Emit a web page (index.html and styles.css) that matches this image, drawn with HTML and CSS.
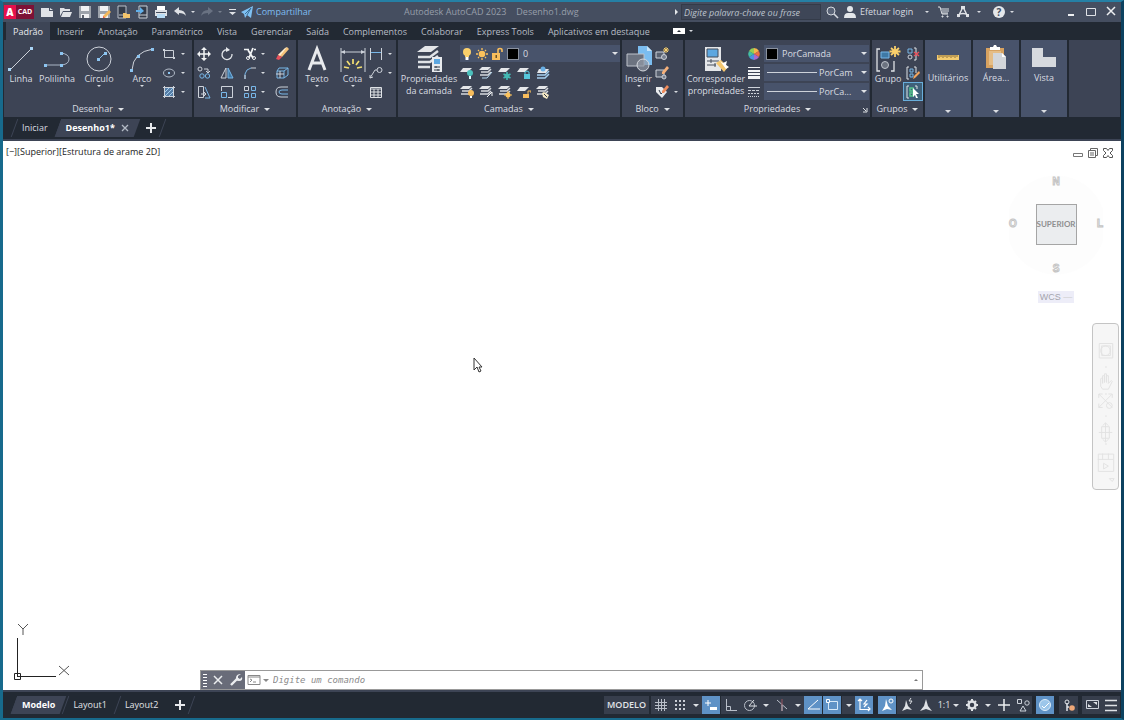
FILE: index.html
```
<!DOCTYPE html>
<html lang="pt-BR">
<head>
    <meta charset="UTF-8">
    <meta name="viewport" content="width=device-width, initial-scale=1.0">
    <title>Autodesk AutoCAD 2023 - Desenho1.dwg</title>
    <link rel="stylesheet" href="styles.css">
</head>
<body>
    <!-- Símbolos compartilhados -->
    <svg class="sprite" aria-hidden="true">
        <symbol id="sheets" viewBox="0 0 14 14">
            <path d="M3 1h9L9 4H0z" fill="#e4e6e9"/>
            <path d="M2 6h7l3-3M1 9h8l3-3" fill="none" stroke="#d5d8dd" stroke-width="1.500"/>
        </symbol>
        <symbol id="sheet" viewBox="0 0 14 14"><path d="M3 2h9L8 6H0z" fill="#e4e6e9"/></symbol>
        <symbol id="bulb" viewBox="0 0 14 14">
            <circle cx="7" cy="5" r="4" fill="#fbd06b"/><path d="M5 8h4v2H5z" fill="#fbd06b"/><path d="M5.500 10h3v3h-3z" fill="#fff"/>
        </symbol>
        <symbol id="sun" viewBox="0 0 14 14">
            <circle cx="7" cy="7" r="3.300" fill="#fbc25c"/>
            <path d="M7 1v2M7 11v2M1 7h2M11 7h2M3 3l1 1M10 10l1 1M11 3l-1 1M4 10l-1 1" stroke="#fbc25c" stroke-width="1.300"/>
        </symbol>
        <symbol id="unlock" viewBox="0 0 14 14">
            <path d="M2 6h8v7H2z" fill="#f8bd5c"/><path d="M8 6V3q0-1.500 2-1.500t2 1.500v2" fill="none" stroke="#f8bd5c" stroke-width="1.600"/><path d="M5.500 8h1.500v3H5.500z" fill="#6b5327"/>
        </symbol>
        <symbol id="pencil" viewBox="0 0 14 14">
            <path d="M12 0l2 2-7 8-4-2z" fill="#f5c27a"/><path d="M10 1l2-1-7 9-2-1z" fill="#fff0d0"/><path d="M3 8l4 2-3 3-3-1z" fill="#e8505b"/>
        </symbol>
    </svg>

    <header class="titlebar">
        <button class="logo" aria-label="AutoCAD"><b>A</b><span>CAD</span></button>
        <div class="quick">
            <button aria-label="Novo"><svg viewBox="0 0 14 14"><path d="M1 3h8v3h4v6H1z" fill="#dfe2e6"/><path d="M10 3l3 2h-3z" fill="#dfe2e6"/></svg></button>
            <button aria-label="Abrir"><svg viewBox="0 0 14 14"><path d="M1 11V3h4l1 1h5v2H4z" fill="#dfe2e6"/><path d="M4 7h9l-2 5H2z" fill="#dfe2e6"/></svg></button>
            <button aria-label="Salvar"><svg viewBox="0 0 14 14"><path d="M1 1h12v12H1z" fill="#9da3ab"/><path d="M3 1h8v5H3zM3 9h8v4H3z" fill="#f0f1f3"/><path d="M4 10h2v3H4z" fill="#59606c"/></svg></button>
            <button aria-label="Salvar como"><svg viewBox="0 0 14 14"><path d="M1 1h12v12H1z" fill="#9da3ab"/><path d="M3 1h8v5H3zM3 9h8v4H3z" fill="#f0f1f3"/><path d="M12 5l2 2-6 6-2 0 0-2z" fill="#f5b95c"/><path d="M6 11l2 2H6z" fill="#e8505b"/></svg></button>
            <button aria-label="Abrir da web"><svg viewBox="0 0 14 14"><path d="M2 1h8v12H2zM3 10h6" fill="#343c4a" stroke="#b9bfc8"/><path d="M7 8h3l1 1h3v4H7z" fill="#f3c46c"/></svg></button>
            <button aria-label="Salvar na web"><svg viewBox="0 0 14 14"><path d="M4 1h8v12H4zM4 10h8" fill="#343c4a" stroke="#c9cfd6"/><path d="M1 5h4V2l4 4-4 3V7H1z" fill="#61b0ea"/></svg></button>
            <button aria-label="Plotar"><svg viewBox="0 0 14 14"><path d="M3 1h8v4H3z" fill="#fff"/><path d="M1 5h12v6H1z" fill="#dfe2e6"/><path d="M2 7h10v1H2z" fill="#454f61"/><path d="M3 9h8v4H3z" fill="#b8dcf5"/></svg></button>
            <button class="undo" aria-label="Desfazer"><svg viewBox="0 0 14 14"><path d="M1 6l5-4v3q6 0 7 6-2-3-7-3v2z" fill="#dfe2e6"/></svg></button>
            <button class="drop" aria-label="Histórico"></button>
            <button class="redo" aria-label="Refazer"><svg viewBox="0 0 14 14"><path d="M13 6L8 2v3q-6 0-7 6 2-3 7-3v2z" fill="#697282"/></svg></button>
            <button class="drop dim" aria-label="Histórico"></button>
            <button class="custom" aria-label="Personalizar"><svg viewBox="0 0 14 14"><path d="M4 4h7v1H4zM4 7h7L7.500 10z" fill="#dfe2e6"/></svg></button>
        </div>
        <button class="share"><svg viewBox="0 0 14 14"><path d="M1 7l12-6-2 12-4-3-2 3-1-4z" fill="#7fc1f3"/><path d="M5 9l6-6-4 7" fill="none" stroke="#3b6f99"/></svg>Compartilhar</button>
        <h1><span>Autodesk AutoCAD 2023</span><span>Desenho1.dwg</span></h1>
        <div class="account">
            <button class="side" aria-label="Recolher"></button>
            <input type="text" placeholder="Digite palavra-chave ou frase" aria-label="Pesquisar">
            <button aria-label="Buscar"><svg viewBox="0 0 14 14" fill="none" stroke="#d5d9df"><circle cx="6" cy="6" r="4" fill="#596376"/><path d="M9 9l4 4" stroke-width="1.600"/></svg></button>
            <button class="login"><svg viewBox="0 0 14 14"><circle cx="7" cy="4" r="3" fill="#e4e7ea"/><path d="M1 13q0-5 4-5h4q4 0 4 5z" fill="#e4e7ea"/></svg>Efetuar login</button>
            <button class="drop" aria-label="Opções da conta"></button>
            <button class="cart" aria-label="Loja"><svg viewBox="0 0 14 14" fill="none" stroke="#dfe2e6"><path d="M1 2h2l2 7h6M4 4h8M5 6h7M5 8h6"/><path d="M5 11h1v1H5zM10 11h1v1h-1z"/></svg></button>
            <button class="apps" aria-label="Autodesk App Store"><svg viewBox="0 0 14 14"><path d="M7 2L2 12M7 2l5 10M2 10q5-3 10 0" fill="none" stroke="#dfe2e6" stroke-width="1.500"/><path d="M5 1h4v3H5zM1 9h3v3H1zM10 9h3v3h-3z" fill="#dfe2e6"/></svg></button>
            <button class="drop" aria-label="Mais"></button>
            <button class="help" aria-label="Ajuda">?</button>
            <button class="drop" aria-label="Mais ajuda"></button>
        </div>
        <div class="window">
            <button aria-label="Minimizar"><svg viewBox="0 0 14 14"><path d="M4 10h6" stroke="#eef0f2" stroke-width="2"/></svg></button>
            <button aria-label="Maximizar"><svg viewBox="0 0 14 14"><path d="M2.500 3.500h9v7h-9z" fill="none" stroke="#dfe2e6"/></svg></button>
            <button aria-label="Fechar"><svg viewBox="0 0 14 14"><path d="M3 2l8 8M11 2l-8 8" stroke="#eef0f2" stroke-width="1.500"/></svg></button>
        </div>
    </header>

    <nav class="ribbon-tabs">
        <a class="active" href="#">Padrão</a>
        <a href="#">Inserir</a>
        <a href="#">Anotação</a>
        <a href="#">Paramétrico</a>
        <a href="#">Vista</a>
        <a href="#">Gerenciar</a>
        <a href="#">Saída</a>
        <a href="#">Complementos</a>
        <a href="#">Colaborar</a>
        <a href="#">Express Tools</a>
        <a href="#">Aplicativos em destaque</a>
        <button class="minimize" aria-label="Minimizar faixa de opções"></button>
        <button class="drop" aria-label="Opções da faixa"></button>
    </nav>

    <div class="ribbon">
        <section class="panel draw">
            <div class="tools">
                <button class="big"><svg viewBox="0 0 28 28"><path d="M3 25L25 3" stroke="#cdd2da"/><path d="M1 23h3v3H1zM23 2h3v3h-3z" fill="#a9d4f5"/></svg>Linha</button>
                <button class="big"><svg viewBox="0 0 28 28"><path d="M2 20h17q7-1 7-6t-8-6" fill="none" stroke="#aab5c6"/><path d="M1 19h3v3H1zM17 19h3v3h-3zM17 7h3v3h-3z" fill="#8cc4f0"/></svg>Polilinha</button>
                <button class="big more"><svg viewBox="0 0 28 28"><circle cx="14" cy="14" r="12" fill="none" stroke="#cdd2da"/><path d="M14 14l6-6" stroke="#8cc4f0"/><path d="M12 13h3v3h-3zM19 7h3v3h-3z" fill="#8cc4f0"/></svg>Círculo</button>
                <button class="big more"><svg viewBox="0 0 28 28"><path d="M4 25Q5 7 25 4" fill="none" stroke="#cdd2da"/><path d="M2 24h3v3H2zM9 10h3v3H9zM23 3h3v3h-3z" fill="#8cc4f0"/></svg>Arco</button>
                <div class="small split">
                    <button aria-label="Retângulo"><svg viewBox="0 0 14 14"><path d="M2.500 3.500h9v7h-9z" fill="none" stroke="#cdd2da"/><path d="M1 2h2v2H1zM11 10h2v2h-2z" fill="#cdd2da"/></svg></button><button class="drop" aria-label="Mais"></button>
                    <button aria-label="Elipse"><svg viewBox="0 0 14 14"><ellipse cx="7" cy="7" rx="5.500" ry="4" fill="none" stroke="#b3bcc9"/><path d="M6 6h2v2H6z" fill="#8cc4f0"/></svg></button><button class="drop" aria-label="Mais"></button>
                    <button aria-label="Hachura"><svg viewBox="0 0 14 14"><path d="M3 3h8v8H3z" fill="#557da6"/><path d="M1 2.500h12M1 11.500h12M2.500 1v12M11.500 1v12" stroke="#cdd2da"/><path d="M3 7l4-4M3 11l8-8M7 11l4-4" stroke="#a5cdec"/></svg></button><button class="drop" aria-label="Mais"></button>
                </div>
            </div>
            <button class="caption">Desenhar</button>
        </section>

        <section class="panel modify">
            <div class="tools small">
                <button aria-label="Mover"><svg viewBox="0 0 14 14"><path d="M7 1v12M1 7h12" stroke="#f1f3f5" stroke-width="1.500"/><path d="M7 0l3 3H4zM7 14l3-3H4zM0 7l3-3v6zM14 7l-3-3v6z" fill="#f1f3f5"/></svg></button>
                <button aria-label="Rotacionar"><svg viewBox="0 0 14 14"><path d="M9 3a5 5 0 1 0 3 4" fill="none" stroke="#e4e7ea" stroke-width="1.300"/><path d="M6 0l4 3-4 2z" fill="#e4e7ea"/></svg></button>
                <button aria-label="Aparar"><svg viewBox="0 0 14 14" fill="none" stroke="#f1f3f5"><path d="M1 2.500h5M11 2.500h2" stroke-width="1.500"/><path d="M5 3l5 8M10 1L6 11" stroke-width="1.800"/><circle cx="5" cy="11" r="1.500"/><circle cx="11" cy="11" r="1.500"/></svg></button><button class="drop" aria-label="Mais"></button>
                <button aria-label="Apagar"><svg viewBox="0 0 14 14"><use href="#pencil"/></svg></button>
                <button aria-label="Copiar"><svg viewBox="0 0 14 14" fill="none" stroke="#cdd2da"><circle cx="3" cy="3" r="2"/><path d="M7 3h4v3M9 5l2 2 2-2"/><g stroke="#78b7e8"><circle cx="5" cy="10" r="2.200"/><circle cx="10.500" cy="10" r="2.200"/></g></svg></button>
                <button aria-label="Espelhar"><svg viewBox="0 0 14 14"><path d="M6 2v10H1z" fill="none" stroke="#cdd2da"/><path d="M8 2v10h5z" fill="#3f79a6" stroke="#78b7e8"/></svg></button>
                <button aria-label="Arredondar"><svg viewBox="0 0 14 14" fill="none"><path d="M2 13V8q1-5 6-6" stroke="#78b7e8"/><path d="M8 2h5M2 9v4" stroke="#cdd2da"/></svg></button><button class="drop" aria-label="Mais"></button>
                <button aria-label="Explodir"><svg viewBox="0 0 14 14" fill="none" stroke="#78b7e8"><path d="M2 5h7v7H2zM4 2h9v7M2 5l2-3M9 5l4-3M9 12l4-3"/><path d="M5 5v7M1 8h8" stroke="#cdd2da"/></svg></button>
                <button aria-label="Esticar"><svg viewBox="0 0 14 14" fill="none" stroke="#cdd2da"><path d="M1.500 1.500h5v11h-5zM4 9h5M7 7l2 2-2 2"/><path d="M8 2l5 11H8" stroke="#78b7e8"/></svg></button>
                <button aria-label="Escala"><svg viewBox="0 0 14 14" fill="none"><path d="M1.500 6V1.500h11v11H8" stroke="#cdd2da"/><path d="M1.500 7.500h5v5h-5z" stroke="#78b7e8"/></svg></button>
                <button aria-label="Matriz"><svg viewBox="0 0 14 14" fill="none" stroke="#78b7e8"><path d="M8.500 1.500h4v4h-4zM1.500 8.500h4v4h-4zM8.500 8.500h4v4h-4z"/><path d="M1.500 1.500h4v4h-4z" stroke="#cdd2da"/></svg></button><button class="drop" aria-label="Mais"></button>
                <button aria-label="Deslocamento"><svg viewBox="0 0 14 14" fill="none"><path d="M13 2H6q-5 0-5 5t5 5h7" stroke="#cdd2da"/><path d="M13 5H7q-3 0-3 2t3 2h6" stroke="#78b7e8"/></svg></button>
            </div>
            <button class="caption">Modificar</button>
        </section>

        <section class="panel annotate">
            <div class="tools">
                <button class="big more"><svg viewBox="0 0 28 28"><path d="M6 25l8-21 8 21M9 18h10" fill="none" stroke="#e8eaed" stroke-width="3"/></svg>Texto</button>
                <button class="big more"><svg viewBox="0 0 28 28"><path d="M2 3v24M26 3v24M2 7h24" stroke="#cdd2da"/><path d="M2 7l4-2v4zM26 7l-4-2v4z" fill="#cdd2da"/><path d="M14 14v5M8 16l3 4M20 16l-3 4M5 22l5 1M23 22l-5 1" stroke="#f3df72" stroke-width="1.700"/></svg>Cota</button>
                <div class="small split">
                    <button aria-label="Linear"><svg viewBox="0 0 14 14" fill="none"><path d="M1.500 1v12M12.500 1v12" stroke="#cdd2da"/><path d="M2 5.500h10" stroke="#78b7e8"/></svg></button><button class="drop" aria-label="Mais"></button>
                    <button aria-label="Chamada"><svg viewBox="0 0 14 14" fill="none" stroke="#cdd2da"><circle cx="10.500" cy="4" r="2.500"/><path d="M8 4H6l-5 8M1 9v3l3-1"/></svg></button><button class="drop" aria-label="Mais"></button>
                    <button aria-label="Tabela"><svg viewBox="0 0 14 14" fill="none" stroke="#dfe2e6"><path d="M1.500 2.500h11v10h-11zM1 4h12M1 7h12M1 10h12M5 4v8M9 4v8"/></svg></button>
                </div>
            </div>
            <button class="caption">Anotação</button>
        </section>

        <section class="panel layers">
            <div class="tools">
                <button class="big"><svg viewBox="0 0 28 28"><path d="M10 1h14l-8 6H2z" fill="#e4e6e9"/><path d="M3 12h12l8-6M3 17h12l8-6M3 22h12" fill="none" stroke="#dfe2e6" stroke-width="2.500"/><path d="M17 12h10v15H17z" fill="#e9ebee"/><path d="M19 14h6v5h-6z" fill="#5da7e0"/><path d="M19 22h6M19 25h6M21 21v2M23 24v2" stroke="#333c48"/></svg>Propriedades<br>da camada</button>
                <div class="layer-tools">
                    <label class="combo"><svg><use href="#bulb"/></svg><svg><use href="#sun"/></svg><svg><use href="#unlock"/></svg><i class="swatch"></i><select aria-label="Camada atual"><option>0</option></select></label>
                    <div class="layer-icons">
                        <button aria-label="Desativar"><svg viewBox="0 0 14 14"><use href="#sheet"/><circle cx="10" cy="7" r="3" fill="#4bc1bd"/><path d="M9 10h2v3H9z" fill="#dff"/></svg></button>
                        <button aria-label="Isolar"><svg viewBox="0 0 14 14"><use href="#sheets"/><path d="M3 12h5l5-6" fill="none" stroke="#b6d7ef"/></svg></button>
                        <button aria-label="Congelar"><svg viewBox="0 0 14 14"><use href="#sheet"/><circle cx="9" cy="10" r="2.500" fill="#43b8b3"/><path d="M9 6v8M5.500 8l7 4M12.500 8l-7 4" stroke="#43b8b3" stroke-width="1.600"/></svg></button>
                        <button aria-label="Bloquear"><svg viewBox="0 0 14 14"><use href="#sheet"/><path d="M7 8h6v5H7z" fill="#55c7db"/><path d="M8 8V6q2-2 4 0v2" fill="none" stroke="#55c7db"/></svg></button>
                        <button aria-label="Tornar atual"><svg viewBox="0 0 14 14"><path d="M3 3h10l-3 4H1z" fill="#e4e6e9"/><circle cx="7" cy="3" r="2.500" fill="#69aee3"/><path d="M1 9h8l4-4M1 12h8l4-4" fill="none" stroke="#a6d0ef" stroke-width="1.500"/></svg></button>
                        <button aria-label="Ativar"><svg viewBox="0 0 14 14"><use href="#sheets"/><circle cx="11" cy="8" r="3" fill="#f8bd5c"/><path d="M10 11h2v2h-2z" fill="#fff"/></svg></button>
                        <button aria-label="Retirar isolamento"><svg viewBox="0 0 14 14"><use href="#sheets"/><path d="M8 12l5-5v4" fill="none" stroke="#f1f3f5"/></svg></button>
                        <button aria-label="Descongelar"><svg viewBox="0 0 14 14"><use href="#sheets"/><circle cx="10" cy="10" r="2.500" fill="#fbc25c"/><path d="M10 6v8M6 10h8" stroke="#fbc25c"/></svg></button>
                        <button aria-label="Desbloquear"><svg viewBox="0 0 14 14"><use href="#sheet"/><path d="M6 9h6v4H6z" fill="#f8bd5c"/><path d="M11 9V6h3v2" fill="none" stroke="#f8bd5c"/></svg></button>
                        <button aria-label="Coincidir camada"><svg viewBox="0 0 14 14"><use href="#sheets"/><path d="M6 8l2-1 5 3-2 4-4-2z" fill="#f4e8c4"/><path d="M8 9l3 3" stroke="#343c4a"/></svg></button>
                    </div>
                </div>
            </div>
            <button class="caption">Camadas</button>
        </section>

        <section class="panel block">
            <div class="tools">
                <button class="big more"><svg viewBox="0 0 28 28"><path d="M13 1h9l5 5v14H13z" fill="#7bbdf0"/><path d="M22 1v5h5" fill="#c7e3f8"/><path d="M2 9h17v12H2z" fill="#6c7380" stroke="#bfc4cc"/><circle cx="18" cy="20" r="6" fill="#9299a5" fill-opacity=".7" stroke="#d5d9df"/></svg>Inserir</button>
                <div class="small split">
                    <button aria-label="Criar bloco"><svg viewBox="0 0 14 14"><path d="M1 5h8v6H1z" fill="#596170" stroke="#cdd2da"/><circle cx="9" cy="10" r="2.500" fill="#778090" stroke="#cdd2da"/><path d="M11 0v6M8 3h6M9 1l4 4M13 1L9 5" stroke="#fbd06b"/></svg></button><span></span>
                    <button aria-label="Editar bloco"><svg viewBox="0 0 14 14"><path d="M1 4h8v7H1z" fill="#596170" stroke="#cdd2da"/><circle cx="9" cy="11" r="2" fill="#778090" stroke="#cdd2da"/><path d="M12 0l2 2-5 6-2 0 0-2z" fill="#f5b07a"/></svg></button><span></span>
                    <button aria-label="Editar atributo"><svg viewBox="0 0 14 14"><path d="M1 2h6l5 5-5 6-6-6z" fill="#e9ebee"/><path d="M4 5l2 4 2-2" fill="none" stroke="#343c4a"/><path d="M12 0l2 2-5 6-2 0 0-2z" fill="#f08c5c"/></svg></button><button class="drop" aria-label="Mais"></button>
                </div>
            </div>
            <button class="caption">Bloco</button>
        </section>

        <section class="panel properties">
            <div class="tools">
                <button class="big"><svg viewBox="0 0 28 28"><path d="M3 2h16v24H3z" fill="#e4e6e9"/><path d="M5 4h11v8H5z" fill="#5da7e0" stroke="#454d5a"/><path d="M5 16h12M5 20h9M9 14v4M13 18v4" stroke="#454d5a"/><path d="M14 18l5-3 7 7-4 5z" fill="#f5c76e"/><path d="M18 16l3 2 4-2-1 4 3 2-3 2z" fill="#fff"/></svg>Corresponder<br>propriedades</button>
                <div class="prop-list">
                    <svg viewBox="0 0 14 14"><path d="M7 7V1a6 6 0 0 1 5 3z" fill="#f5b64b"/><path d="M7 7l5-3a6 6 0 0 1 0 6z" fill="#ea6e45"/><path d="M7 7l5 3a6 6 0 0 1-5 3z" fill="#a968cf"/><path d="M7 7v6a6 6 0 0 1-5-3z" fill="#4a94e4"/><path d="M7 7l-5 3a6 6 0 0 1 0-6z" fill="#42bfa6"/><path d="M7 7L2 4a6 6 0 0 1 5-3z" fill="#92cd56"/></svg>
                    <label class="combo"><i class="swatch"></i><select aria-label="Cor"><option>PorCamada</option></select></label>
                    <svg viewBox="0 0 14 14"><path d="M1 1h12v1H1zM1 4h12v2H1zM1 7h12v2H1zM1 10h12v3H1z" fill="#f1f3f5"/></svg>
                    <label class="combo"><i class="stroke"></i><select aria-label="Espessura de linha"><option>PorCam</option></select></label>
                    <svg viewBox="0 0 14 14" stroke="#cdd2da"><path d="M1 2.500h12"/><path d="M1 5.500h12" stroke-dasharray="3 1"/><path d="M1 8.500h12" stroke-dasharray="2 1"/><path d="M1 11.500h12" stroke-dasharray="1 1"/></svg>
                    <label class="combo"><i class="stroke"></i><select aria-label="Tipo de linha"><option>PorCa...</option></select></label>
                </div>
            </div>
            <button class="caption">Propriedades</button>
            <button class="launcher" aria-label="Abrir propriedades"><svg viewBox="0 0 6 6"><path d="M1 1l3 3M5 1v4H1" fill="none" stroke="#dfe2e6"/></svg></button>
        </section>

        <section class="panel groups">
            <div class="tools">
                <button class="big"><svg viewBox="0 0 28 28"><path d="M6 4H3v22h3M17 26h3V16" fill="none" stroke="#dfe2e6" stroke-width="1.300"/><path d="M7 7h8v6H7z" fill="#3f79a6" stroke="#78b7e8"/><circle cx="11" cy="20" r="3.500" fill="#6c7380" stroke="#bfc4cc"/><path d="M21 1v11M15.500 6.500h11M17 3l8 7M25 3l-8 7" stroke="#fbd06b" stroke-width="1.800"/></svg>Grupo</button>
                <div class="small">
                    <button aria-label="Desagrupar"><svg viewBox="0 0 14 14" fill="none"><path d="M2 2h4v4H2z" stroke="#78b7e8"/><circle cx="4" cy="10" r="2" stroke="#cdd2da"/><path d="M8 1h2v12H8" stroke="#dfe2e6"/><path d="M8 5l5 4M13 5L8 9" stroke="#e8505b" stroke-width="1.500"/></svg></button>
                    <button aria-label="Editar grupo"><svg viewBox="0 0 14 14" fill="none"><path d="M3 1H1v12h2M8 1h2v6" stroke="#dfe2e6"/><path d="M4 3h3v3H4zM4 8h3v3H4z" stroke="#78b7e8"/><path d="M13 5l1 2-5 5-2 1 1-3z" fill="#f5a45c"/></svg></button>
                    <button class="on" aria-label="Seleção de grupo"><svg viewBox="0 0 14 14" fill="none"><path d="M3 1H1v12h2M9 1h2v3" stroke="#dfe2e6"/><path d="M4 3h3v3H4zM4 8h3v3H4z" stroke="#57c48d" stroke-width="1.500"/><path d="M7 3l6 6-3 0 2 4-2 0-1-3-2 2z" fill="#fff"/></svg></button>
                </div>
            </div>
            <button class="caption">Grupos</button>
        </section>

        <button class="folded"><svg viewBox="0 0 28 28"><path d="M3 11h22v5H3z" fill="#f3cc70"/><path d="M5 11v3M7 11v2M9 11v3M11 11v2M13 11v3M15 11v2M17 11v3M19 11v2M21 11v3M23 11v2" stroke="#8e713a"/></svg>Utilitários</button>
        <button class="folded"><svg viewBox="0 0 28 28"><path d="M4 4h18v20H4z" fill="#d7a260"/><path d="M7 7h12v14H7z" fill="#e5bd86"/><path d="M8 3h3l1-2h2l1 2h3v3H8z" fill="#fff"/><path d="M11 9h9l4 4v12H11z" fill="#d3d6da"/><path d="M20 9v4h4z" fill="#fff"/></svg>Área...</button>
        <button class="folded"><svg viewBox="0 0 28 28"><path d="M2 4h11v9h13v10H2z" fill="#d6d9de"/></svg>Vista</button>
        <div class="rest"></div>
    </div>

    <nav class="file-tabs">
        <a href="#">Iniciar</a>
        <a class="active" href="#">Desenho1* <svg viewBox="0 0 8 8"><path d="M1 1l6 6M7 1L1 7" stroke="#b3bac5" stroke-width="1.300"/></svg></a>
        <button class="plus" aria-label="Novo desenho"></button>
    </nav>

    <main class="canvas">
        <div class="view-label"><button>[−]</button><button>[Superior]</button><button>[Estrutura de arame 2D]</button></div>
        <div class="view-window">
            <button aria-label="Minimizar"><svg viewBox="0 0 12 12"><path d="M1.500 6.500h9v3h-9z" fill="none" stroke="#777"/></svg></button>
            <button aria-label="Restaurar"><svg viewBox="0 0 12 12"><path d="M3.500 3V1.500h7v7H9M1.500 3.500h7v7h-7zM3 6h4M3 8h4" fill="none" stroke="#666"/></svg></button>
            <button aria-label="Fechar"><svg viewBox="0 0 12 12"><path d="M1.500 1.500h3l1.500 2 1.500-2h3v2L8 6l2.500 2.500v2h-3L6 8.500l-1.500 2h-3v-2L4 6 1.500 3.500z" fill="none" stroke="#555"/></svg></button>
        </div>
        <div class="cube">
            <button class="north">N</button>
            <button class="west">O</button>
            <button class="face">SUPERIOR</button>
            <button class="east">L</button>
            <button class="south">S</button>
            <button class="wcs">WCS <span>—</span></button>
        </div>
        <div class="navbar">
            <svg viewBox="0 0 26 166" fill="none" stroke="#e2e2e2">
                <path d="M6.500 17.500h14v15h-14zM9 20h9v10H9z"/><circle cx="13" cy="25" r="5"/>
                <path d="M13 42h1M13 70h1M13 93h1M13 122h1" stroke-width="2"/>
                <path d="M8 62V54l2-1v6-8h2v7-9h2v9-7h2v8l3-3 1 1-4 8h-6z"/>
                <path d="M6 70l14 14M20 70L6 84M6 74v-4h4M16 70h4v4M6 80v4h4"/><circle cx="17" cy="82" r="3"/>
                <path d="M13 100v20M6 110h14M10 103l3-3 3 3M10 117l3 3 3-3M9 104v12h8v-12z"/>
                <path d="M5.500 132.500h16v18h-16zM5 138h16M10 132v6M16 132v6M11 142l5 3-5 3z"/>
                <path d="M17 158h5l-2 3z"/>
            </svg>
        </div>
        <svg class="pointer" viewBox="0 0 10 16"><path d="M1 1v12l3-3 2 5 2-1-2-4h3z" fill="#fff" stroke="#333"/></svg>
        <svg class="ucs" viewBox="0 0 60 57" fill="none" stroke="#222"><path d="M4.500 15v39M4 53.500h39M1.500 50.500h6v6h-6z"/><path d="M5 1l5 5 5-5M10 6v6M46 43l10 9M56 43l-10 9" stroke="#555"/></svg>
        <form class="command">
            <div class="grip"></div>
            <button type="button" aria-label="Fechar"><svg viewBox="0 0 14 14"><path d="M3 3l8 8M11 3l-8 8" stroke="#eceef0" stroke-width="1.500"/></svg></button>
            <button type="button" aria-label="Personalizar"><svg viewBox="0 0 14 14"><path d="M2 12l7-7" stroke="#eceef0" stroke-width="2.400"/><path d="M12 1L9 3v2l2 1 2-2q1 4-3 4T7 5q0-4 5-4z" fill="#eceef0"/></svg></button>
            <button type="button" class="recent" aria-label="Comandos recentes"><svg viewBox="0 0 14 12"><path d="M1 1.500h12v9H1zM1 3h12M3 5l2 1-2 2M6 8h3" fill="none" stroke="#888"/></svg></button>
            <input type="text" placeholder="Digite um comando" aria-label="Comando">
            <button type="button" class="history" aria-label="Histórico de comandos"></button>
        </form>
    </main>

    <footer class="statusbar">
        <nav class="layout-tabs">
            <a class="active" href="#">Modelo</a>
            <a href="#">Layout1</a>
            <a href="#">Layout2</a>
            <button class="plus" aria-label="Novo layout"></button>
        </nav>
        <div class="status">
            <button class="model">MODELO</button>
            <button aria-label="Grade"><svg viewBox="0 0 14 14"><path d="M4.500 1v12M7.500 1v12M10.500 1v12M1 4.500h12M1 7.500h12M1 10.500h12" stroke="#b9bfc9"/></svg></button>
            <button aria-label="Snap"><svg viewBox="0 0 14 14"><path d="M2 3h12M2 7h12M2 11h12" stroke="#c9ced6" stroke-width="2" stroke-dasharray="2 2"/></svg></button><button class="drop" aria-label="Mais"></button>
            <button class="on" aria-label="Entrada dinâmica"><svg viewBox="0 0 14 14"><path d="M1 5h6M4 2v6" stroke="#fff"/><path d="M6 9h7v3H6z" fill="#fff"/></svg></button>
            <button aria-label="Ortogonal"><svg viewBox="0 0 14 14"><path d="M2.500 1v11.500H13M3 8.500h3.500V12" fill="none" stroke="#b9bfc9"/></svg></button>
            <button aria-label="Polar"><svg viewBox="0 0 14 14"><circle cx="6.500" cy="7.500" r="5" fill="none" stroke="#b9bfc9"/><path d="M6 8h8M6 8l5-6" stroke="#dfe2e6"/></svg></button><button class="drop" aria-label="Mais"></button>
            <button aria-label="Isométrico"><svg viewBox="0 0 14 14"><path d="M2 2l10 9" stroke="#b9bfc9"/><path d="M7 1v12" stroke="#96525f"/><path d="M7 7v6" stroke="#b9bfc9"/></svg></button><button class="drop" aria-label="Mais"></button>
            <button class="on" aria-label="Rastreamento"><svg viewBox="0 0 14 14"><path d="M12 2L2 11h12" fill="none" stroke="#fff"/></svg></button>
            <button class="on" aria-label="Snap a objeto"><svg viewBox="0 0 14 14"><path d="M4 3.500h8.500v8H3.500V5" fill="none" stroke="#d7e9f8"/><path d="M1.500 1.500h3v3h-3z" fill="#5f92c6" stroke="#fff"/></svg></button><button class="drop" aria-label="Mais"></button>
            <button class="on" aria-label="UCS dinâmico"><svg viewBox="0 0 14 14"><path d="M3 1v10.500h10M1 3l2-2 2 2M11 9l2 2-2 2M10 2L7 6h3L7 9" fill="none" stroke="#fff" stroke-width="1.200"/></svg></button>
            <button class="on gap" aria-label="Visibilidade da anotação"><svg viewBox="0 0 14 14"><path d="M6 1l2 7 4 4-5-1-5 2 3-5z" fill="#fff"/><circle cx="11" cy="3" r="2" fill="none" stroke="#fff"/></svg></button>
            <button aria-label="Escala automática"><svg viewBox="0 0 14 14"><path d="M6 2l2 6 4 4-5-1-5 2 3-5z" fill="#dfe2e6"/><path d="M11 0L9 3h3l-2 3" fill="none" stroke="#dfe2e6"/></svg></button>
            <button aria-label="Escala da anotação"><svg viewBox="0 0 14 14"><path d="M7 1l2 7 4 5-6-2-6 2 4-5z" fill="#dfe2e6"/></svg></button>
            <button class="scale">1:1</button>
            <button aria-label="Espaço de trabalho"><svg viewBox="0 0 14 14"><circle cx="7" cy="7" r="3.500" fill="none" stroke="#dfe2e6" stroke-width="2.500"/><path d="M7 1v2M7 11v2M1 7h2M11 7h2M3 3l1 1M10 10l1 1M11 3l-1 1M4 10l-1 1" stroke="#dfe2e6" stroke-width="2"/></svg></button><button class="drop" aria-label="Mais"></button>
            <button aria-label="Monitor de anotação"><svg viewBox="0 0 14 14"><path d="M7 1v12M1 7h12" stroke="#eceef0" stroke-width="1.500"/></svg></button>
            <button aria-label="Isolar objetos"><svg viewBox="0 0 14 14" fill="none" stroke="#cdd2da"><path d="M1.500 1.500h4v4h-4zM7 8l3 5H4z"/><circle cx="11" cy="5" r="2.200"/></svg></button>
            <button class="on gap" aria-label="Desempenho gráfico"><svg viewBox="0 0 14 14"><circle cx="7" cy="7" r="5.500" fill="#9cc6ea" stroke="#dcecf9"/><path d="M4 8l2 2 5-5" fill="none" stroke="#fff"/></svg></button>
            <button class="gap" aria-label="Notificações"><svg viewBox="0 0 14 14"><path d="M5 5v8M5 9h2" stroke="#dfe2e6" stroke-width="1.500"/><circle cx="5" cy="4" r="2" fill="none" stroke="#dfe2e6"/><circle cx="10" cy="10" r="2.800" fill="#f0a878"/></svg></button>
            <button class="gap" aria-label="Tela limpa"><svg viewBox="0 0 14 14"><path d="M1.500 2.500h12v8h-12z" fill="none" stroke="#cdd2da"/><path d="M8 4h4v3zM3 9h4L3 6z" fill="#dfe2e6"/></svg></button>
            <button aria-label="Personalização"><svg viewBox="0 0 14 14"><path d="M1 2.500h12M1 7.500h12M1 12.500h12" stroke="#dfe2e6" stroke-width="1.500"/></svg></button>
        </div>
    </footer>
</body>
</html>
```
FILE: styles.css
```
* {
    box-sizing: border-box;
}

body {
    margin: 0;
    height: 100vh;
    display: flex;
    flex-direction: column;
    border: 2px solid #176a8c;
    border-width: 2px 3px 2px 3px;
    border-color: #2580a5 #0d4260 #176a8c #176a8c;
    background: #222933;
    color: #d9dce1;
    font-family: "Open Sans", "Noto Sans", sans-serif;
    font-size: 9px;
    line-height: 12px;
}

button,
input,
select {
    margin: 0;
    padding: 0;
    border: none;
    background: none;
    color: inherit;
    font: inherit;
}

a {
    color: inherit;
    text-decoration: none;
}

svg {
    display: block;
    flex: none;
    width: 14px;
    height: 14px;
}

.sprite {
    position: absolute;
    width: 0;
    height: 0;
}

/* seta de lista suspensa */
.drop {
    display: flex;
    align-items: center;
    justify-content: center;
    width: 12px;
}

.drop::after {
    content: "";
    border: 2px solid transparent;
    border-top-color: #d9dce1;
    border-bottom: none;
}

.drop.dim::after {
    border-top-color: #78808e;
}

/* barra de título */
.titlebar {
    display: flex;
    align-items: center;
    height: 20px;
    background: #454e60;
}

.titlebar button {
    display: flex;
    align-items: center;
    justify-content: center;
}

.logo {
    width: 30px;
    height: 14px;
    margin-left: 1px;
    background: #7d1136;
    color: #fff;
    font-size: 7px;
    font-weight: 700;
}

.logo b {
    width: 12px;
    background: #e5114c;
    font-size: 10px;
    line-height: 14px;
}

.logo span {
    flex: 1;
}

.quick {
    display: flex;
    margin-left: 3px;
}

.quick button {
    width: 19px;
}

.quick .drop {
    width: 8px;
}

.quick .custom {
    width: 16px;
}

.share {
    gap: 2px;
    color: #7fbdf0;
}

.titlebar h1 {
    flex: 1;
    display: flex;
    justify-content: center;
    gap: 10px;
    margin: 0;
    color: #979eaa;
    font-size: 9px;
    font-weight: 400;
    white-space: nowrap;
}

.account {
    display: flex;
    align-items: center;
}

.side {
    width: 10px;
}

.side::after {
    content: "";
    border: 3px solid transparent;
    border-left-color: #e4e7ea;
    border-right: none;
}

.account input {
    width: 140px;
    height: 16px;
    padding-left: 2px;
    background: #3e4657;
    border: 1px solid #343b49;
    font-style: italic;
}

.account input::placeholder {
    color: #bcc2cb;
}

.account button {
    height: 16px;
}

.account input + button {
    width: 22px;
}

.account .login {
    justify-content: flex-start;
    width: 73px;
    gap: 3px;
    white-space: nowrap;
}

.account .drop {
    width: 14px;
}

.cart,
.apps {
    width: 19px;
}

.login + .drop {
    margin-left: 4px;
}

.account .help {
    width: 12px;
    height: 12px;
    margin-left: 7px;
    border-radius: 50%;
    background: #e4e7ea;
    color: #454e60;
    font-size: 10px;
    font-weight: 700;
}

.window {
    display: flex;
    margin-left: 42px;
}

.window button {
    width: 20px;
}

/* faixa de opções */
.ribbon-tabs {
    display: flex;
    height: 18px;
    padding-left: 3px;
    color: #b7bcc5;
    line-height: 20px;
    white-space: nowrap;
}

.ribbon-tabs a {
    padding: 0 7px;
}

.ribbon-tabs .active {
    background: #3d4556;
    color: #e8eaed;
}

.minimize {
    align-self: center;
    width: 12px;
    height: 6px;
    margin-left: 16px;
    background: #fff;
}

.minimize::after {
    content: "";
    display: block;
    width: 0;
    margin: 0 auto;
    border: 2px solid transparent;
    border-bottom-color: #222933;
    border-top: none;
}

.ribbon {
    display: flex;
    gap: 2px;
    height: 77px;
    padding: 0 1px;
}

.panel {
    position: relative;
    display: flex;
    flex-direction: column;
    flex: none;
    background: #3d4455;
}

.tools {
    display: grid;
    height: 62px;
    padding-top: 5px;
}

.big,
.folded {
    display: flex;
    flex-direction: column;
    align-items: center;
    white-space: nowrap;
}

.big svg,
.folded svg {
    width: 28px;
    height: 28px;
}

.more::after,
.folded::after {
    content: "";
    border: 2px solid transparent;
    border-top-color: #d9dce1;
    border-bottom: none;
}

.caption {
    display: flex;
    align-items: center;
    justify-content: center;
    gap: 5px;
    height: 14px;
}

.caption::after,
.combo::after {
    content: "";
    border: 3px solid transparent;
    border-top-color: #dfe2e6;
    border-bottom: none;
}

.small {
    display: grid;
    grid-auto-rows: 17px;
    row-gap: 2px;
    align-items: center;
}

.split {
    grid-template-columns: 15px 12px;
}

.small .drop {
    height: 14px;
}

.draw {
    width: 188px;
}

.draw .tools {
    grid-template-columns: 34px 38px 46px 40px 30px;
}

.modify {
    width: 102px;
}

.modify .tools {
    grid-template-columns: 23px 23px 14px 18px 14px;
    padding-left: 3px;
}

.annotate {
    width: 98px;
}

.annotate .tools {
    grid-template-columns: 38px 33px 27px;
}

.layers {
    width: 222px;
}

.layers .tools {
    grid-template-columns: 62px 1fr;
}

.layer-icons {
    display: grid;
    grid-template-columns: repeat(5, 14px);
    grid-auto-rows: 17px;
    gap: 2px 5px;
    align-items: center;
    margin-top: 2px;
}

.combo {
    display: flex;
    align-items: center;
    gap: 1px;
    height: 17px;
    padding-right: 2px;
    background: #48536b;
}

.combo select {
    flex: 1;
    min-width: 0;
    margin-left: 3px;
    appearance: none;
    outline: none;
}

.swatch {
    width: 12px;
    height: 12px;
    margin-left: 2px;
    border: 1px solid #8a919e;
    background: #000;
}

.stroke {
    width: 50px;
    height: 1px;
    margin-left: 3px;
    background: #cdd2da;
}

.stroke + select {
    margin-left: 1px;
}

.block {
    width: 61px;
}

.block .tools {
    grid-template-columns: 33px 28px;
}

.properties {
    width: 185px;
}

.properties .tools {
    grid-template-columns: 62px 1fr;
}

.prop-list {
    display: grid;
    grid-template-columns: 14px 1fr;
    grid-auto-rows: 17px;
    gap: 2px 3px;
    align-items: center;
    padding-right: 1px;
}

.launcher {
    position: absolute;
    right: 2px;
    bottom: 4px;
}

.launcher svg {
    width: 6px;
    height: 6px;
}

.groups {
    width: 51px;
}

.groups .tools {
    grid-template-columns: 32px 18px;
}

.groups .small button {
    height: 17px;
    padding: 1px 2px;
}

.groups .small .on {
    background: #3e6079;
    outline: 1px solid #69aedb;
}

.folded {
    flex: none;
    width: 46px;
    padding: 4px 0;
    background: #48536b;
}

.folded::after {
    margin-top: auto;
    border-width: 3px;
    border-bottom: none;
}

.rest {
    flex: 1;
    background: #3d4455;
}

/* abas de arquivos */
.file-tabs,
.layout-tabs {
    display: flex;
    align-items: center;
}

.file-tabs {
    height: 24px;
    padding-left: 10px;
    border-bottom: 2px solid #3d4455;
}

.file-tabs a,
.layout-tabs a {
    position: relative;
    display: flex;
    align-items: center;
    gap: 6px;
    height: 18px;
    padding: 0 9px;
    z-index: 0;
}

.file-tabs a::before,
.layout-tabs a::before,
.plus::before {
    content: "";
    position: absolute;
    inset: 0 1px;
    z-index: -1;
    border-left: 1px solid #3d4455;
    transform: skewX(-20deg);
}

.file-tabs .active,
.layout-tabs .active {
    color: #fff;
    font-weight: 700;
}

.file-tabs .active::before,
.layout-tabs .active::before {
    background: #3d4455;
}

.file-tabs svg {
    width: 8px;
    height: 8px;
}

.plus {
    position: relative;
    width: 26px;
    height: 18px;
}

.plus::before {
    border-left: none;
    border-right: 1px solid #3d4455;
}

.plus::after {
    content: "";
    display: block;
    width: 10px;
    height: 10px;
    margin: auto;
    background: linear-gradient(#e8eaed, #e8eaed) center / 10px 2px no-repeat, linear-gradient(#e8eaed, #e8eaed) center / 2px 10px no-repeat;
}

/* área de desenho */
.canvas {
    position: relative;
    flex: 1;
    background: #fff;
    color: #222;
}

.view-label {
    padding: 5px 3px;
}

.view-window {
    position: absolute;
    top: 6px;
    right: 7px;
    display: flex;
    gap: 3px;
}

.view-window svg {
    width: 12px;
    height: 12px;
}

.cube {
    position: absolute;
    top: 34px;
    right: 18px;
    display: grid;
    grid-template-columns: 26px 42px 26px;
    grid-template-rows: 14px 70px 20px 24px;
    justify-items: center;
    align-items: center;
    background: radial-gradient(circle at 47px 50px, #fdfdfd 49px, transparent 50px);
    color: #fff;
    font-family: "Liberation Sans", sans-serif;
    font-size: 10px;
    font-weight: 700;
    -webkit-text-stroke: 1px #c4c4c4;
}

.cube button {
    grid-column: 2;
}

.cube .west,
.cube .face,
.cube .east {
    grid-row: 2;
}

.cube .west {
    grid-column: 1;
    justify-self: start;
}

.cube .east {
    grid-column: 3;
    justify-self: end;
}

.cube .face {
    width: 41px;
    height: 41px;
    border: 1px solid #a5a5a5;
    background: #ebedef;
    color: #8f8f8f;
    font-family: Lato, sans-serif;
    font-size: 8px;
    -webkit-text-stroke: 0;
}

.cube .wcs {
    grid-row: 4;
    align-self: end;
    width: 36px;
    background: #ededf8;
    color: #a4a4ac;
    font-size: 9px;
    font-weight: 400;
    white-space: nowrap;
    -webkit-text-stroke: 0;
}

.wcs span {
    color: #ccc;
}

.navbar {
    position: absolute;
    top: 182px;
    right: 2px;
    border: 1px solid #c4c4c4;
    border-radius: 4px;
    background: #f6f6f6;
}

.navbar svg {
    width: 25px;
    height: 165px;
}

.pointer {
    position: absolute;
    top: 216px;
    left: 470px;
    width: 10px;
    height: 16px;
}

.ucs {
    position: absolute;
    bottom: 10px;
    left: 10px;
    width: 60px;
    height: 57px;
}

.command {
    position: absolute;
    right: 198px;
    bottom: 0;
    left: 197px;
    display: flex;
    align-items: center;
    height: 20px;
    border: 1px solid #999;
    background: #fff;
}

.command button {
    display: flex;
    align-items: center;
    justify-content: center;
    align-self: stretch;
    width: 18px;
    background: #696c79;
}

.grip {
    align-self: stretch;
    width: 8px;
    border: 2px solid #696c79;
    background: radial-gradient(circle, #fff 30%, #696c79 50%) 0 0 / 2px 3px;
}

.command .recent {
    gap: 2px;
    width: 26px;
    background: none;
}

.recent svg {
    height: 12px;
}

.recent::after {
    content: "";
    border: 3px solid transparent;
    border-top-color: #888;
    border-bottom: none;
}

.command input {
    flex: 1;
    padding-left: 2px;
    outline: none;
    font: italic 9px "DejaVu Sans Mono", "Liberation Mono", monospace;
}

.command input::placeholder {
    color: #8c8c8c;
}

.command .history {
    width: 12px;
    background: none;
}

.history::after {
    content: "";
    border: 2px solid transparent;
    border-bottom-color: #777;
    border-top: none;
}

/* barra de status */
.statusbar {
    display: flex;
    justify-content: space-between;
    height: 28px;
    padding: 0 1px;
    border-top: 2px solid #3d4455;
    color: #e1e4e8;
}

.layout-tabs {
    padding-left: 9px;
}

.status {
    display: flex;
    align-items: center;
}

.status button {
    display: flex;
    align-items: center;
    justify-content: center;
    width: 19px;
    height: 18px;
    background: #373e4c;
}

.status .model {
    width: 45px;
    margin-right: 2px;
    font-weight: 600;
}

.status .drop {
    width: 13px;
}

.status .drop::after,
.scale::after {
    content: "";
    width: 0;
    border: 3px solid transparent;
    border-top-color: #dfe2e6;
    border-bottom: none;
}

.status .scale {
    gap: 3px;
    width: 27px;
}

.status .on {
    width: 18px;
    margin-right: 1px;
    background: #5f92c6;
}

.status .gap {
    margin-left: 4px;
}
```
